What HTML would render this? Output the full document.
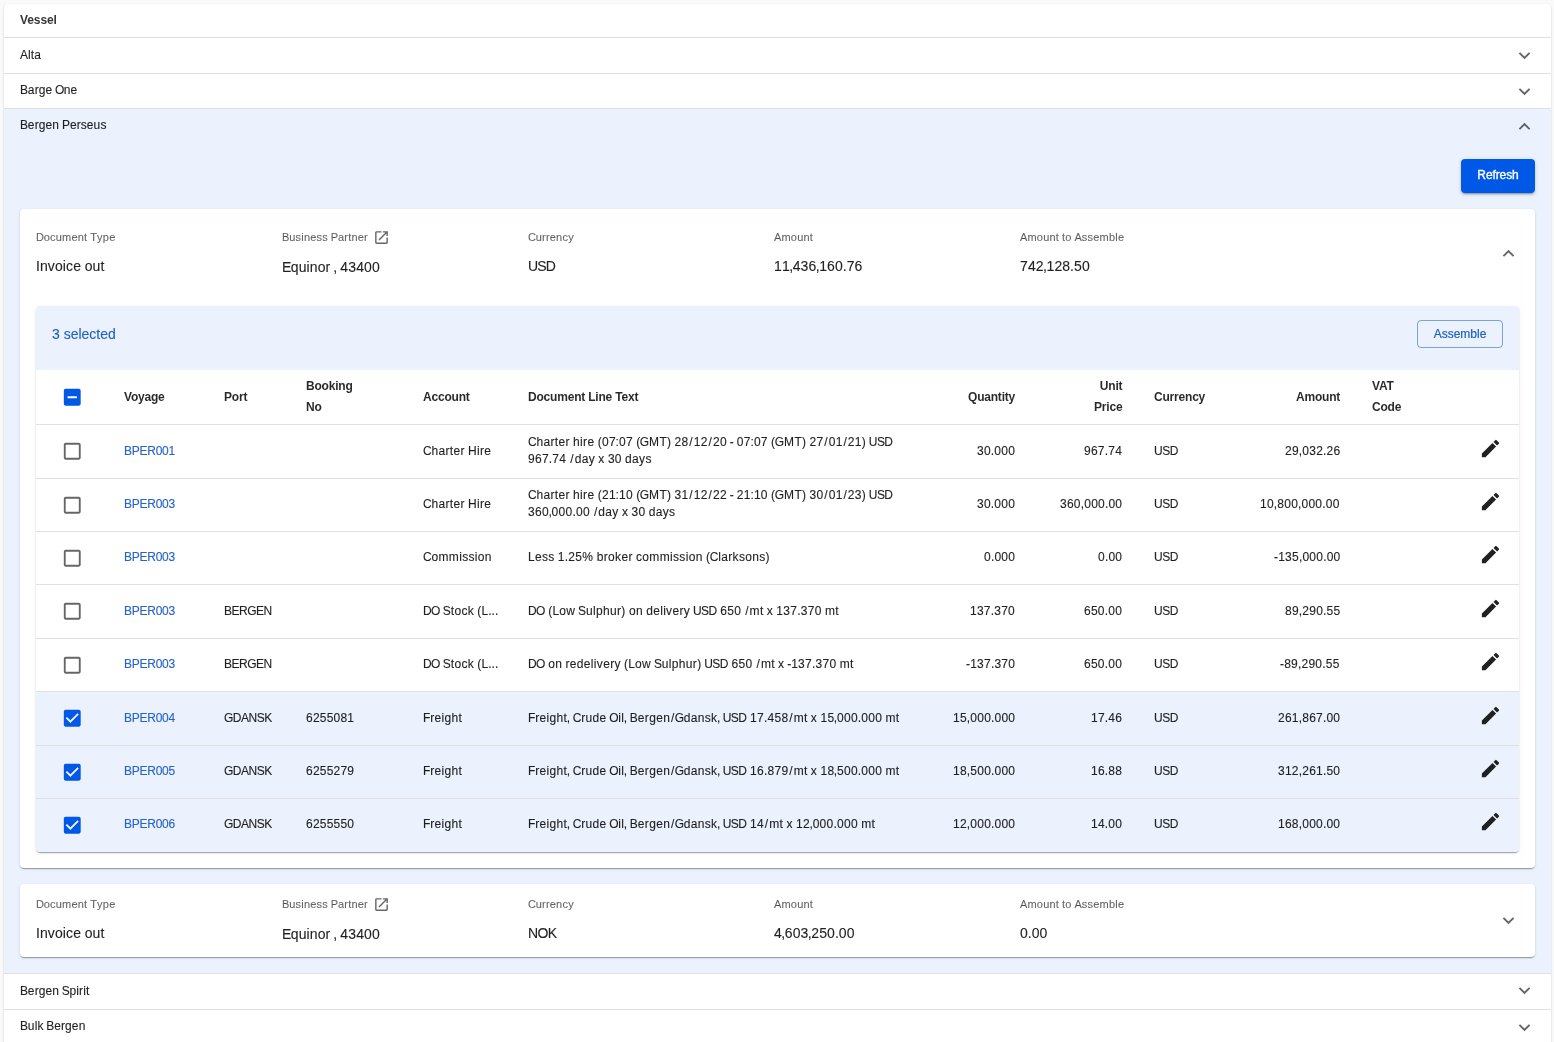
<!DOCTYPE html>
<html><head><meta charset="utf-8">
<style>
*{box-sizing:border-box;margin:0;padding:0}
html,body{width:1554px;height:1042px;overflow:hidden;background:#fafafa;font-family:"Liberation Sans",sans-serif;color:rgba(0,0,0,0.87)}
.a{position:absolute}
.t{white-space:nowrap}
svg{display:block}
.t{will-change:transform;-webkit-text-stroke:0.12px currentColor}
.u{letter-spacing:-0.4px}
</style></head><body>
<div class="a" style="left:4px;top:4px;width:1547px;height:1100px;background:#fff;border-radius:4px;box-shadow:0 2px 1px -1px rgba(0,0,0,.2),0 1px 1px 0 rgba(0,0,0,.14),0 1px 3px 0 rgba(0,0,0,.12)"></div>
<div class="a" style="left:4px;top:109px;width:1547px;height:864px;background:#ebf2fe"></div>
<div class="a" style="left:4px;top:37px;width:1547px;height:1px;background:#e0e0e0"></div>
<div class="a" style="left:4px;top:73px;width:1547px;height:1px;background:#e0e0e0"></div>
<div class="a" style="left:4px;top:108px;width:1547px;height:1px;background:#e0e0e0"></div>
<div class="a" style="left:4px;top:973px;width:1547px;height:1px;background:#e0e0e0"></div>
<div class="a" style="left:4px;top:1009px;width:1547px;height:1px;background:#e0e0e0"></div>
<div class="a t" style="left:20px;top:13px;font-size:12px;line-height:14px;font-weight:bold;color:rgba(0,0,0,0.8);letter-spacing:-0.1px;-webkit-text-stroke:0;">Vessel</div>
<div class="a t" style="left:20px;top:48px;font-size:12px;line-height:14px;font-weight:normal;color:rgba(0,0,0,0.87);"><span style="letter-spacing:0.03px">A</span><span style="letter-spacing:0.1px">lta</span></div>
<div class="a t" style="left:20px;top:83px;font-size:12px;line-height:14px;font-weight:normal;color:rgba(0,0,0,0.87);"><span style="letter-spacing:-0.15px">B</span><span style="letter-spacing:0.1px">arg</span><span style="letter-spacing:-0.07px">e</span><span style="letter-spacing:-0.59px"> </span><span style="letter-spacing:-0.42px">O</span><span style="letter-spacing:0.1px">ne</span></div>
<div class="a t" style="left:20px;top:118px;font-size:12px;line-height:14px;font-weight:normal;color:rgba(0,0,0,0.87);"><span style="letter-spacing:-0.15px">B</span><span style="letter-spacing:0.1px">erge</span><span style="letter-spacing:-0.07px">n</span><span style="letter-spacing:-0.27px"> </span><span style="letter-spacing:-0.1px">P</span><span style="letter-spacing:0.1px">erseus</span></div>
<div class="a t" style="left:20px;top:984px;font-size:12px;line-height:14px;font-weight:normal;color:rgba(0,0,0,0.87);"><span style="letter-spacing:-0.15px">B</span><span style="letter-spacing:0.1px">erge</span><span style="letter-spacing:-0.07px">n</span><span style="letter-spacing:-0.45px"> </span><span style="letter-spacing:-0.28px">S</span><span style="letter-spacing:0.1px">pirit</span></div>
<div class="a t" style="left:20px;top:1019px;font-size:12px;line-height:14px;font-weight:normal;color:rgba(0,0,0,0.87);"><span style="letter-spacing:-0.15px">B</span><span style="letter-spacing:0.1px">ul</span><span style="letter-spacing:-0.07px">k</span><span style="letter-spacing:-0.32px"> </span><span style="letter-spacing:-0.15px">B</span><span style="letter-spacing:0.1px">ergen</span></div>
<svg class="a" style="left:1512.95px;top:43.92px;width:23px;height:23px" viewBox="0 0 24 24"><path fill="rgba(0,0,0,0.6)" d="M16.59 8.59 12 13.17 7.41 8.59 6 10l6 6 6-6z"/></svg>
<svg class="a" style="left:1512.95px;top:79.72px;width:23px;height:23px" viewBox="0 0 24 24"><path fill="rgba(0,0,0,0.6)" d="M16.59 8.59 12 13.17 7.41 8.59 6 10l6 6 6-6z"/></svg>
<svg class="a" style="left:1512.95px;top:114.88px;width:23px;height:23px" viewBox="0 0 24 24"><path fill="rgba(0,0,0,0.6)" d="M12 8l-6 6 1.41 1.41L12 10.83l4.59 4.58L18 14z"/></svg>
<svg class="a" style="left:1512.95px;top:979.42px;width:23px;height:23px" viewBox="0 0 24 24"><path fill="rgba(0,0,0,0.6)" d="M16.59 8.59 12 13.17 7.41 8.59 6 10l6 6 6-6z"/></svg>
<svg class="a" style="left:1512.95px;top:1015.82px;width:23px;height:23px" viewBox="0 0 24 24"><path fill="rgba(0,0,0,0.6)" d="M16.59 8.59 12 13.17 7.41 8.59 6 10l6 6 6-6z"/></svg>
<div class="a t" style="left:1461px;top:159px;width:74px;height:34px;background:#0059e6;border-radius:4px;box-shadow:0 3px 1px -2px rgba(0,0,0,.2),0 2px 2px 0 rgba(0,0,0,.14),0 1px 5px 0 rgba(0,0,0,.12);color:#fff;font-size:12px;line-height:33px;text-align:center;font-weight:normal;-webkit-text-stroke:0.35px #fff;letter-spacing:-0.1px">Refresh</div>
<div class="a" style="left:20px;top:209px;width:1515px;height:659px;background:#fff;border-radius:4px;box-shadow:0 2px 1px -1px rgba(0,0,0,.2),0 1px 1px 0 rgba(0,0,0,.14),0 1px 3px 0 rgba(0,0,0,.12)"></div>
<div class="a t" style="left:36px;top:231px;font-size:11px;line-height:13px;font-weight:normal;color:rgba(0,0,0,0.6);"><span style="letter-spacing:-0.18px">D</span><span style="letter-spacing:0.2px">ocumen</span><span style="letter-spacing:0.03px">t</span><span style="letter-spacing:-0.03px"> </span><span style="letter-spacing:0.15px">T</span><span style="letter-spacing:0.2px">ype</span></div>
<div class="a t" style="left:36px;top:258px;font-size:14px;line-height:16px;font-weight:normal;color:rgba(0,0,0,0.87);"><span style="letter-spacing:0.08px">I</span><span style="letter-spacing:0.1px">nvoic</span><span style="letter-spacing:-0.1px">e </span><span style="letter-spacing:0.1px">out</span></div>
<div class="a t" style="left:282px;top:231px;font-size:11px;line-height:13px;font-weight:normal;color:rgba(0,0,0,0.6);"><span style="letter-spacing:-0.05px">B</span><span style="letter-spacing:0.2px">usines</span><span style="letter-spacing:0.03px">s</span><span style="letter-spacing:-0.18px"> </span><span style="letter-spacing:-0.01px">P</span><span style="letter-spacing:0.2px">artner</span></div>
<div class="a t" style="left:282px;top:259px;font-size:14px;line-height:16px;font-weight:normal;color:rgba(0,0,0,0.87);"><span style="letter-spacing:-0.58px">E</span><span style="letter-spacing:0.1px">quino</span><span style="letter-spacing:-0.1px">r</span><span style="letter-spacing:-0.66px"> ,</span><span style="letter-spacing:-0.1px"> </span><span style="letter-spacing:0.1px">43400</span></div>
<div class="a t" style="left:528px;top:231px;font-size:11px;line-height:13px;font-weight:normal;color:rgba(0,0,0,0.6);"><span style="letter-spacing:-0.2px">C</span><span style="letter-spacing:0.2px">urrency</span></div>
<div class="a t" style="left:528px;top:258px;font-size:14px;line-height:16px;font-weight:normal;color:rgba(0,0,0,0.87);"><span style="letter-spacing:-0.85px">U</span><span style="letter-spacing:-0.79px">SD</span></div>
<div class="a t" style="left:774px;top:231px;font-size:11px;line-height:13px;font-weight:normal;color:rgba(0,0,0,0.6);"><span style="letter-spacing:0.11px">A</span><span style="letter-spacing:0.2px">mount</span></div>
<div class="a t" style="left:774px;top:258px;font-size:14px;line-height:16px;font-weight:normal;color:rgba(0,0,0,0.87);"><span style="letter-spacing:0.1px">1</span><span style="letter-spacing:-0.46px">1,</span><span style="letter-spacing:0.1px">43</span><span style="letter-spacing:-0.46px">6,</span><span style="letter-spacing:0.1px">16</span><span style="letter-spacing:0.01px">0.</span><span style="letter-spacing:0.1px">76</span></div>
<div class="a t" style="left:1020px;top:231px;font-size:11px;line-height:13px;font-weight:normal;color:rgba(0,0,0,0.6);"><span style="letter-spacing:0.11px">A</span><span style="letter-spacing:0.2px">moun</span><span style="letter-spacing:0.03px">t </span><span style="letter-spacing:0.2px">t</span><span style="letter-spacing:0.03px">o</span><span style="letter-spacing:-0.07px"> </span><span style="letter-spacing:0.11px">A</span><span style="letter-spacing:0.2px">ssemble</span></div>
<div class="a t" style="left:1020px;top:258px;font-size:14px;line-height:16px;font-weight:normal;color:rgba(0,0,0,0.87);"><span style="letter-spacing:0.1px">74</span><span style="letter-spacing:-0.46px">2,</span><span style="letter-spacing:0.1px">12</span><span style="letter-spacing:0.01px">8.</span><span style="letter-spacing:0.1px">50</span></div>
<svg class="a" style="left:372.5px;top:229px;width:17px;height:17px" viewBox="0 0 24 24"><path fill="rgba(0,0,0,0.6)" d="M19 19H5V5h7V3H5c-1.11 0-2 .9-2 2v14c0 1.1.89 2 2 2h14c1.1 0 2-.9 2-2v-7h-2v7zM14 3v2h3.59l-9.83 9.83 1.41 1.41L19 6.41V10h2V3h-7z"/></svg>
<svg class="a" style="left:1497.0px;top:242.08px;width:23px;height:23px" viewBox="0 0 24 24"><path fill="rgba(0,0,0,0.6)" d="M12 8l-6 6 1.41 1.41L12 10.83l4.59 4.58L18 14z"/></svg>
<div class="a" style="left:36px;top:306px;width:1483px;height:546px;background:#fff;border-radius:4px;box-shadow:0 2px 1px -1px rgba(0,0,0,.2),0 1px 1px 0 rgba(0,0,0,.14),0 1px 3px 0 rgba(0,0,0,.12);overflow:hidden"></div>
<div class="a" style="left:36px;top:306px;width:1483px;height:64px;background:#ebf2fe;border-radius:4px 4px 0 0"></div>
<div class="a t" style="left:52px;top:326px;font-size:14px;line-height:16px;font-weight:normal;color:#2160c0;">3 selected</div>
<div class="a t" style="left:1417px;top:320px;width:86px;height:28px;border:1px solid rgba(33,96,192,0.55);border-radius:4px;color:#2160c0;font-size:12px;line-height:26px;-webkit-text-stroke:0.2px #2160c0;text-align:center">Assemble</div>
<div class="a" style="left:36px;top:424px;width:1483px;height:1px;background:#e0e0e0"></div>
<svg class="a" style="left:61px;top:386px;width:22.5px;height:22.5px" viewBox="0 0 24 24"><path fill="#0059e6" d="M19 3H5c-1.1 0-2 .9-2 2v14c0 1.1.9 2 2 2h14c1.1 0 2-.9 2-2V5c0-1.1-.9-2-2-2zm-2 10H7v-2h10v2z"/></svg>
<div class="a t" style="left:124px;top:387px;font-size:12px;line-height:21px;font-weight:bold;color:rgba(0,0,0,0.84);letter-spacing:-0.2px;-webkit-text-stroke:0;">Voyage</div>
<div class="a t" style="left:224px;top:387px;font-size:12px;line-height:21px;font-weight:bold;color:rgba(0,0,0,0.84);letter-spacing:-0.2px;-webkit-text-stroke:0;">Port</div>
<div class="a t" style="left:306px;top:376px;font-size:12px;line-height:21px;font-weight:bold;color:rgba(0,0,0,0.84);letter-spacing:-0.2px;-webkit-text-stroke:0;">Booking<br>No</div>
<div class="a t" style="left:423px;top:387px;font-size:12px;line-height:21px;font-weight:bold;color:rgba(0,0,0,0.84);letter-spacing:-0.2px;-webkit-text-stroke:0;">Account</div>
<div class="a t" style="left:528px;top:387px;font-size:12px;line-height:21px;font-weight:bold;color:rgba(0,0,0,0.84);letter-spacing:-0.2px;-webkit-text-stroke:0;">Document Line Text</div>
<div class="a t" style="right:539px;top:387px;font-size:12px;line-height:21px;font-weight:bold;color:rgba(0,0,0,0.84);text-align:right;letter-spacing:-0.2px;-webkit-text-stroke:0;">Quantity</div>
<div class="a t" style="right:432px;top:376px;font-size:12px;line-height:21px;font-weight:bold;color:rgba(0,0,0,0.84);text-align:right;letter-spacing:-0.2px;-webkit-text-stroke:0;">Unit<br>Price</div>
<div class="a t" style="left:1154px;top:387px;font-size:12px;line-height:21px;font-weight:bold;color:rgba(0,0,0,0.84);letter-spacing:-0.2px;-webkit-text-stroke:0;">Currency</div>
<div class="a t" style="right:214px;top:387px;font-size:12px;line-height:21px;font-weight:bold;color:rgba(0,0,0,0.84);text-align:right;letter-spacing:-0.2px;-webkit-text-stroke:0;">Amount</div>
<div class="a t" style="left:1372px;top:376px;font-size:12px;line-height:21px;font-weight:bold;color:rgba(0,0,0,0.84);letter-spacing:-0.2px;-webkit-text-stroke:0;">VAT<br>Code</div>
<div class="a" style="left:36px;top:478px;width:1483px;height:1px;background:#e0e0e0"></div>
<svg class="a" style="left:61px;top:440.2px;width:22.5px;height:22.5px" viewBox="0 0 24 24"><path fill="rgba(0,0,0,0.6)" d="M19 5v14H5V5h14m0-2H5c-1.1 0-2 .9-2 2v14c0 1.1.9 2 2 2h14c1.1 0 2-.9 2-2V5c0-1.1-.9-2-2-2z"/></svg>
<div class="a t" style="left:124px;top:443px;font-size:12px;line-height:16px;font-weight:normal;color:#2764c5;letter-spacing:-0.25px;">BPER001</div>
<div class="a t" style="left:423px;top:443px;font-size:12px;line-height:16px;font-weight:normal;color:rgba(0,0,0,0.87);letter-spacing:0.22px;"><span style="letter-spacing:-0.14px">C</span><span style="letter-spacing:0.33px">harte</span><span style="letter-spacing:0.11px">r</span><span style="letter-spacing:0.01px"> </span><span style="letter-spacing:0.23px">H</span><span style="letter-spacing:0.33px">ire</span></div>
<div class="a t" style="left:528px;top:434px;font-size:12px;line-height:17px;font-weight:normal;color:rgba(0,0,0,0.87);letter-spacing:0.22px;"><span style="letter-spacing:-0.14px">C</span><span style="letter-spacing:0.33px">harte</span><span style="letter-spacing:0.11px">r </span><span style="letter-spacing:0.33px">hir</span><span style="letter-spacing:0.11px">e</span><span style="letter-spacing:0.07px"> </span><span style="letter-spacing:0.28px">(</span><span style="letter-spacing:0.31px">0</span><span style="letter-spacing:0.03px">7:</span><span style="letter-spacing:0.31px">0</span><span style="letter-spacing:0.1px">7</span><span style="letter-spacing:0.07px"> </span><span style="letter-spacing:-0.33px">(</span><span style="letter-spacing:-0.1px">G</span><span style="letter-spacing:0.43px">M</span><span style="letter-spacing:0.23px">T</span><span style="letter-spacing:0.1px">) </span><span style="letter-spacing:0.31px">2</span><span style="letter-spacing:1.08px">8/</span><span style="letter-spacing:0.31px">1</span><span style="letter-spacing:1.08px">2/</span><span style="letter-spacing:0.31px">2</span><span style="letter-spacing:0.1px">0</span><span style="letter-spacing:-0.32px"> -</span><span style="letter-spacing:0.1px"> </span><span style="letter-spacing:0.31px">0</span><span style="letter-spacing:0.03px">7:</span><span style="letter-spacing:0.31px">0</span><span style="letter-spacing:0.1px">7</span><span style="letter-spacing:0.07px"> </span><span style="letter-spacing:-0.33px">(</span><span style="letter-spacing:-0.1px">G</span><span style="letter-spacing:0.43px">M</span><span style="letter-spacing:0.23px">T</span><span style="letter-spacing:0.1px">) </span><span style="letter-spacing:0.31px">2</span><span style="letter-spacing:1.08px">7/</span><span style="letter-spacing:0.31px">0</span><span style="letter-spacing:1.08px">1/</span><span style="letter-spacing:0.31px">21</span><span style="letter-spacing:0.1px">)</span><span style="letter-spacing:-0.39px"> </span><span style="letter-spacing:-0.6px">U</span><span style="letter-spacing:-0.55px">SD</span><br><span style="letter-spacing:0.31px">96</span><span style="letter-spacing:0.18px">7.</span><span style="letter-spacing:0.31px">7</span><span style="letter-spacing:0.1px">4</span><span style="letter-spacing:0.86px"> </span><span style="letter-spacing:1.09px">/</span><span style="letter-spacing:0.33px">da</span><span style="letter-spacing:0.11px">y x</span><span style="letter-spacing:0.1px"> </span><span style="letter-spacing:0.31px">3</span><span style="letter-spacing:0.1px">0</span><span style="letter-spacing:0.11px"> </span><span style="letter-spacing:0.33px">days</span></div>
<div class="a t" style="right:539px;top:443px;font-size:12px;line-height:16px;font-weight:normal;color:rgba(0,0,0,0.87);text-align:right;letter-spacing:0.22px;">30.000</div>
<div class="a t" style="right:432px;top:443px;font-size:12px;line-height:16px;font-weight:normal;color:rgba(0,0,0,0.87);text-align:right;letter-spacing:0.22px;">967.74</div>
<div class="a t" style="left:1153.5px;top:443px;font-size:12px;line-height:16px;font-weight:normal;color:rgba(0,0,0,0.87);letter-spacing:-0.45px;">USD</div>
<div class="a t" style="right:214px;top:443px;font-size:12px;line-height:16px;font-weight:normal;color:rgba(0,0,0,0.87);text-align:right;letter-spacing:0.22px;">29,032.26</div>
<svg class="a" style="left:1478.5px;top:436.7px;width:23px;height:23px" viewBox="0 0 24 24"><path fill="rgba(0,0,0,0.87)" d="M3 17.25V21h3.75L17.81 9.94l-3.75-3.75L3 17.25zM20.71 7.04c.39-.39.39-1.02 0-1.41l-2.34-2.34a.9959.9959 0 0 0-1.41 0l-1.83 1.83 3.75 3.75 1.83-1.83z"/></svg>
<div class="a" style="left:36px;top:531px;width:1483px;height:1px;background:#e0e0e0"></div>
<svg class="a" style="left:61px;top:493.8px;width:22.5px;height:22.5px" viewBox="0 0 24 24"><path fill="rgba(0,0,0,0.6)" d="M19 5v14H5V5h14m0-2H5c-1.1 0-2 .9-2 2v14c0 1.1.9 2 2 2h14c1.1 0 2-.9 2-2V5c0-1.1-.9-2-2-2z"/></svg>
<div class="a t" style="left:124px;top:496px;font-size:12px;line-height:16px;font-weight:normal;color:#2764c5;letter-spacing:-0.25px;">BPER003</div>
<div class="a t" style="left:423px;top:496px;font-size:12px;line-height:16px;font-weight:normal;color:rgba(0,0,0,0.87);letter-spacing:0.22px;"><span style="letter-spacing:-0.14px">C</span><span style="letter-spacing:0.33px">harte</span><span style="letter-spacing:0.11px">r</span><span style="letter-spacing:0.01px"> </span><span style="letter-spacing:0.23px">H</span><span style="letter-spacing:0.33px">ire</span></div>
<div class="a t" style="left:528px;top:487px;font-size:12px;line-height:17px;font-weight:normal;color:rgba(0,0,0,0.87);letter-spacing:0.22px;"><span style="letter-spacing:-0.14px">C</span><span style="letter-spacing:0.33px">harte</span><span style="letter-spacing:0.11px">r </span><span style="letter-spacing:0.33px">hir</span><span style="letter-spacing:0.11px">e</span><span style="letter-spacing:0.07px"> </span><span style="letter-spacing:0.28px">(</span><span style="letter-spacing:0.31px">2</span><span style="letter-spacing:0.03px">1:</span><span style="letter-spacing:0.31px">1</span><span style="letter-spacing:0.1px">0</span><span style="letter-spacing:0.07px"> </span><span style="letter-spacing:-0.33px">(</span><span style="letter-spacing:-0.1px">G</span><span style="letter-spacing:0.43px">M</span><span style="letter-spacing:0.23px">T</span><span style="letter-spacing:0.1px">) </span><span style="letter-spacing:0.31px">3</span><span style="letter-spacing:1.08px">1/</span><span style="letter-spacing:0.31px">1</span><span style="letter-spacing:1.08px">2/</span><span style="letter-spacing:0.31px">2</span><span style="letter-spacing:0.1px">2</span><span style="letter-spacing:-0.32px"> -</span><span style="letter-spacing:0.1px"> </span><span style="letter-spacing:0.31px">2</span><span style="letter-spacing:0.03px">1:</span><span style="letter-spacing:0.31px">1</span><span style="letter-spacing:0.1px">0</span><span style="letter-spacing:0.07px"> </span><span style="letter-spacing:-0.33px">(</span><span style="letter-spacing:-0.1px">G</span><span style="letter-spacing:0.43px">M</span><span style="letter-spacing:0.23px">T</span><span style="letter-spacing:0.1px">) </span><span style="letter-spacing:0.31px">3</span><span style="letter-spacing:1.08px">0/</span><span style="letter-spacing:0.31px">0</span><span style="letter-spacing:1.08px">1/</span><span style="letter-spacing:0.31px">23</span><span style="letter-spacing:0.1px">)</span><span style="letter-spacing:-0.39px"> </span><span style="letter-spacing:-0.6px">U</span><span style="letter-spacing:-0.55px">SD</span><br><span style="letter-spacing:0.31px">36</span><span style="letter-spacing:-0.21px">0,</span><span style="letter-spacing:0.31px">00</span><span style="letter-spacing:0.18px">0.</span><span style="letter-spacing:0.31px">0</span><span style="letter-spacing:0.1px">0</span><span style="letter-spacing:0.86px"> </span><span style="letter-spacing:1.09px">/</span><span style="letter-spacing:0.33px">da</span><span style="letter-spacing:0.11px">y x</span><span style="letter-spacing:0.1px"> </span><span style="letter-spacing:0.31px">3</span><span style="letter-spacing:0.1px">0</span><span style="letter-spacing:0.11px"> </span><span style="letter-spacing:0.33px">days</span></div>
<div class="a t" style="right:539px;top:496px;font-size:12px;line-height:16px;font-weight:normal;color:rgba(0,0,0,0.87);text-align:right;letter-spacing:0.22px;">30.000</div>
<div class="a t" style="right:432px;top:496px;font-size:12px;line-height:16px;font-weight:normal;color:rgba(0,0,0,0.87);text-align:right;letter-spacing:0.22px;">360,000.00</div>
<div class="a t" style="left:1153.5px;top:496px;font-size:12px;line-height:16px;font-weight:normal;color:rgba(0,0,0,0.87);letter-spacing:-0.45px;">USD</div>
<div class="a t" style="right:214px;top:496px;font-size:12px;line-height:16px;font-weight:normal;color:rgba(0,0,0,0.87);text-align:right;letter-spacing:0.22px;">10,800,000.00</div>
<svg class="a" style="left:1478.5px;top:489.7px;width:23px;height:23px" viewBox="0 0 24 24"><path fill="rgba(0,0,0,0.87)" d="M3 17.25V21h3.75L17.81 9.94l-3.75-3.75L3 17.25zM20.71 7.04c.39-.39.39-1.02 0-1.41l-2.34-2.34a.9959.9959 0 0 0-1.41 0l-1.83 1.83 3.75 3.75 1.83-1.83z"/></svg>
<div class="a" style="left:36px;top:584px;width:1483px;height:1px;background:#e0e0e0"></div>
<svg class="a" style="left:61px;top:546.8px;width:22.5px;height:22.5px" viewBox="0 0 24 24"><path fill="rgba(0,0,0,0.6)" d="M19 5v14H5V5h14m0-2H5c-1.1 0-2 .9-2 2v14c0 1.1.9 2 2 2h14c1.1 0 2-.9 2-2V5c0-1.1-.9-2-2-2z"/></svg>
<div class="a t" style="left:124px;top:549px;font-size:12px;line-height:16px;font-weight:normal;color:#2764c5;letter-spacing:-0.25px;">BPER003</div>
<div class="a t" style="left:423px;top:549px;font-size:12px;line-height:16px;font-weight:normal;color:rgba(0,0,0,0.87);letter-spacing:0.22px;"><span style="letter-spacing:-0.14px">C</span><span style="letter-spacing:0.33px">ommission</span></div>
<div class="a t" style="left:528px;top:549px;font-size:12px;line-height:16px;font-weight:normal;color:rgba(0,0,0,0.87);letter-spacing:0.22px;"><span style="letter-spacing:0.19px">L</span><span style="letter-spacing:0.33px">es</span><span style="letter-spacing:0.11px">s</span><span style="letter-spacing:0.1px"> </span><span style="letter-spacing:0.18px">1.</span><span style="letter-spacing:0.31px">2</span><span style="letter-spacing:0.52px">5</span><span style="letter-spacing:0.3px">%</span><span style="letter-spacing:0.11px"> </span><span style="letter-spacing:0.33px">broke</span><span style="letter-spacing:0.11px">r </span><span style="letter-spacing:0.33px">commissio</span><span style="letter-spacing:0.11px">n</span><span style="letter-spacing:0.07px"> </span><span style="letter-spacing:-0.18px">(</span><span style="letter-spacing:-0.14px">C</span><span style="letter-spacing:0.33px">larkson</span><span style="letter-spacing:0.32px">s</span><span style="letter-spacing:0.31px">)</span></div>
<div class="a t" style="right:539px;top:549px;font-size:12px;line-height:16px;font-weight:normal;color:rgba(0,0,0,0.87);text-align:right;letter-spacing:0.22px;">0.000</div>
<div class="a t" style="right:432px;top:549px;font-size:12px;line-height:16px;font-weight:normal;color:rgba(0,0,0,0.87);text-align:right;letter-spacing:0.22px;">0.00</div>
<div class="a t" style="left:1153.5px;top:549px;font-size:12px;line-height:16px;font-weight:normal;color:rgba(0,0,0,0.87);letter-spacing:-0.45px;">USD</div>
<div class="a t" style="right:214px;top:549px;font-size:12px;line-height:16px;font-weight:normal;color:rgba(0,0,0,0.87);text-align:right;letter-spacing:0.22px;">-135,000.00</div>
<svg class="a" style="left:1478.5px;top:542.7px;width:23px;height:23px" viewBox="0 0 24 24"><path fill="rgba(0,0,0,0.87)" d="M3 17.25V21h3.75L17.81 9.94l-3.75-3.75L3 17.25zM20.71 7.04c.39-.39.39-1.02 0-1.41l-2.34-2.34a.9959.9959 0 0 0-1.41 0l-1.83 1.83 3.75 3.75 1.83-1.83z"/></svg>
<div class="a" style="left:36px;top:638px;width:1483px;height:1px;background:#e0e0e0"></div>
<svg class="a" style="left:61px;top:600.2px;width:22.5px;height:22.5px" viewBox="0 0 24 24"><path fill="rgba(0,0,0,0.6)" d="M19 5v14H5V5h14m0-2H5c-1.1 0-2 .9-2 2v14c0 1.1.9 2 2 2h14c1.1 0 2-.9 2-2V5c0-1.1-.9-2-2-2z"/></svg>
<div class="a t" style="left:124px;top:603px;font-size:12px;line-height:16px;font-weight:normal;color:#2764c5;letter-spacing:-0.25px;">BPER003</div>
<div class="a t" style="left:224px;top:603px;font-size:12px;line-height:16px;font-weight:normal;color:rgba(0,0,0,0.87);letter-spacing:-0.5px;">BERGEN</div>
<div class="a t" style="left:423px;top:603px;font-size:12px;line-height:16px;font-weight:normal;color:rgba(0,0,0,0.87);letter-spacing:0.22px;"><span style="letter-spacing:-0.7px">D</span><span style="letter-spacing:-0.48px">O</span><span style="letter-spacing:-0.34px"> </span><span style="letter-spacing:-0.11px">S</span><span style="letter-spacing:0.33px">toc</span><span style="letter-spacing:0.11px">k</span><span style="letter-spacing:0.07px"> </span><span style="letter-spacing:0.15px">(</span><span style="letter-spacing:0.06px">L...</span></div>
<div class="a t" style="left:528px;top:603px;font-size:12px;line-height:16px;font-weight:normal;color:rgba(0,0,0,0.87);letter-spacing:0.22px;"><span style="letter-spacing:-0.7px">D</span><span style="letter-spacing:-0.48px">O</span><span style="letter-spacing:0.07px"> </span><span style="letter-spacing:0.15px">(</span><span style="letter-spacing:0.19px">L</span><span style="letter-spacing:0.33px">o</span><span style="letter-spacing:0.11px">w</span><span style="letter-spacing:-0.34px"> </span><span style="letter-spacing:-0.11px">S</span><span style="letter-spacing:0.33px">ulphu</span><span style="letter-spacing:0.32px">r</span><span style="letter-spacing:0.1px">)</span><span style="letter-spacing:0.11px"> </span><span style="letter-spacing:0.33px">o</span><span style="letter-spacing:0.11px">n </span><span style="letter-spacing:0.33px">deliver</span><span style="letter-spacing:0.11px">y</span><span style="letter-spacing:-0.39px"> </span><span style="letter-spacing:-0.6px">U</span><span style="letter-spacing:-0.55px">S</span><span style="letter-spacing:-0.34px">D</span><span style="letter-spacing:0.1px"> </span><span style="letter-spacing:0.31px">65</span><span style="letter-spacing:0.1px">0</span><span style="letter-spacing:0.86px"> </span><span style="letter-spacing:1.09px">/</span><span style="letter-spacing:0.33px">m</span><span style="letter-spacing:0.11px">t x</span><span style="letter-spacing:0.1px"> </span><span style="letter-spacing:0.31px">13</span><span style="letter-spacing:0.18px">7.</span><span style="letter-spacing:0.31px">37</span><span style="letter-spacing:0.1px">0</span><span style="letter-spacing:0.11px"> </span><span style="letter-spacing:0.33px">mt</span></div>
<div class="a t" style="right:539px;top:603px;font-size:12px;line-height:16px;font-weight:normal;color:rgba(0,0,0,0.87);text-align:right;letter-spacing:0.22px;">137.370</div>
<div class="a t" style="right:432px;top:603px;font-size:12px;line-height:16px;font-weight:normal;color:rgba(0,0,0,0.87);text-align:right;letter-spacing:0.22px;">650.00</div>
<div class="a t" style="left:1153.5px;top:603px;font-size:12px;line-height:16px;font-weight:normal;color:rgba(0,0,0,0.87);letter-spacing:-0.45px;">USD</div>
<div class="a t" style="right:214px;top:603px;font-size:12px;line-height:16px;font-weight:normal;color:rgba(0,0,0,0.87);text-align:right;letter-spacing:0.22px;">89,290.55</div>
<svg class="a" style="left:1478.5px;top:596.7px;width:23px;height:23px" viewBox="0 0 24 24"><path fill="rgba(0,0,0,0.87)" d="M3 17.25V21h3.75L17.81 9.94l-3.75-3.75L3 17.25zM20.71 7.04c.39-.39.39-1.02 0-1.41l-2.34-2.34a.9959.9959 0 0 0-1.41 0l-1.83 1.83 3.75 3.75 1.83-1.83z"/></svg>
<div class="a" style="left:36px;top:691px;width:1483px;height:1px;background:#e0e0e0"></div>
<svg class="a" style="left:61px;top:653.8px;width:22.5px;height:22.5px" viewBox="0 0 24 24"><path fill="rgba(0,0,0,0.6)" d="M19 5v14H5V5h14m0-2H5c-1.1 0-2 .9-2 2v14c0 1.1.9 2 2 2h14c1.1 0 2-.9 2-2V5c0-1.1-.9-2-2-2z"/></svg>
<div class="a t" style="left:124px;top:656px;font-size:12px;line-height:16px;font-weight:normal;color:#2764c5;letter-spacing:-0.25px;">BPER003</div>
<div class="a t" style="left:224px;top:656px;font-size:12px;line-height:16px;font-weight:normal;color:rgba(0,0,0,0.87);letter-spacing:-0.5px;">BERGEN</div>
<div class="a t" style="left:423px;top:656px;font-size:12px;line-height:16px;font-weight:normal;color:rgba(0,0,0,0.87);letter-spacing:0.22px;"><span style="letter-spacing:-0.7px">D</span><span style="letter-spacing:-0.48px">O</span><span style="letter-spacing:-0.34px"> </span><span style="letter-spacing:-0.11px">S</span><span style="letter-spacing:0.33px">toc</span><span style="letter-spacing:0.11px">k</span><span style="letter-spacing:0.07px"> </span><span style="letter-spacing:0.15px">(</span><span style="letter-spacing:0.06px">L...</span></div>
<div class="a t" style="left:528px;top:656px;font-size:12px;line-height:16px;font-weight:normal;color:rgba(0,0,0,0.87);letter-spacing:0.22px;"><span style="letter-spacing:-0.7px">D</span><span style="letter-spacing:-0.48px">O</span><span style="letter-spacing:0.11px"> </span><span style="letter-spacing:0.33px">o</span><span style="letter-spacing:0.11px">n </span><span style="letter-spacing:0.33px">redeliver</span><span style="letter-spacing:0.11px">y</span><span style="letter-spacing:0.07px"> </span><span style="letter-spacing:0.15px">(</span><span style="letter-spacing:0.19px">L</span><span style="letter-spacing:0.33px">o</span><span style="letter-spacing:0.11px">w</span><span style="letter-spacing:-0.34px"> </span><span style="letter-spacing:-0.11px">S</span><span style="letter-spacing:0.33px">ulphu</span><span style="letter-spacing:0.32px">r</span><span style="letter-spacing:0.1px">)</span><span style="letter-spacing:-0.39px"> </span><span style="letter-spacing:-0.6px">U</span><span style="letter-spacing:-0.55px">S</span><span style="letter-spacing:-0.34px">D</span><span style="letter-spacing:0.1px"> </span><span style="letter-spacing:0.31px">65</span><span style="letter-spacing:0.1px">0</span><span style="letter-spacing:0.86px"> </span><span style="letter-spacing:1.09px">/</span><span style="letter-spacing:0.33px">m</span><span style="letter-spacing:0.11px">t x</span><span style="letter-spacing:-0.32px"> </span><span style="letter-spacing:-0.11px">-</span><span style="letter-spacing:0.31px">13</span><span style="letter-spacing:0.18px">7.</span><span style="letter-spacing:0.31px">37</span><span style="letter-spacing:0.1px">0</span><span style="letter-spacing:0.11px"> </span><span style="letter-spacing:0.33px">mt</span></div>
<div class="a t" style="right:539px;top:656px;font-size:12px;line-height:16px;font-weight:normal;color:rgba(0,0,0,0.87);text-align:right;letter-spacing:0.22px;">-137.370</div>
<div class="a t" style="right:432px;top:656px;font-size:12px;line-height:16px;font-weight:normal;color:rgba(0,0,0,0.87);text-align:right;letter-spacing:0.22px;">650.00</div>
<div class="a t" style="left:1153.5px;top:656px;font-size:12px;line-height:16px;font-weight:normal;color:rgba(0,0,0,0.87);letter-spacing:-0.45px;">USD</div>
<div class="a t" style="right:214px;top:656px;font-size:12px;line-height:16px;font-weight:normal;color:rgba(0,0,0,0.87);text-align:right;letter-spacing:0.22px;">-89,290.55</div>
<svg class="a" style="left:1478.5px;top:649.7px;width:23px;height:23px" viewBox="0 0 24 24"><path fill="rgba(0,0,0,0.87)" d="M3 17.25V21h3.75L17.81 9.94l-3.75-3.75L3 17.25zM20.71 7.04c.39-.39.39-1.02 0-1.41l-2.34-2.34a.9959.9959 0 0 0-1.41 0l-1.83 1.83 3.75 3.75 1.83-1.83z"/></svg>
<div class="a" style="left:36px;top:692px;width:1483px;height:53px;background:#ebf2fe"></div>
<div class="a" style="left:36px;top:745px;width:1483px;height:1px;background:#e0e0e0"></div>
<svg class="a" style="left:61px;top:707.2px;width:22.5px;height:22.5px" viewBox="0 0 24 24"><path fill="#0059e6" d="M19 3H5c-1.11 0-2 .9-2 2v14c0 1.1.89 2 2 2h14c1.1 0 2-.9 2-2V5c0-1.1-.9-2-2-2zm-9 14l-5-5 1.41-1.41L10 14.17l7.59-7.59L19 8l-9 9z"/></svg>
<div class="a t" style="left:124px;top:710px;font-size:12px;line-height:16px;font-weight:normal;color:#2764c5;letter-spacing:-0.25px;">BPER004</div>
<div class="a t" style="left:224px;top:710px;font-size:12px;line-height:16px;font-weight:normal;color:rgba(0,0,0,0.87);letter-spacing:-0.5px;">GDANSK</div>
<div class="a t" style="left:306px;top:710px;font-size:12px;line-height:16px;font-weight:normal;color:rgba(0,0,0,0.87);letter-spacing:0.22px;">6255081</div>
<div class="a t" style="left:423px;top:710px;font-size:12px;line-height:16px;font-weight:normal;color:rgba(0,0,0,0.87);letter-spacing:0.22px;"><span style="letter-spacing:-0.07px">F</span><span style="letter-spacing:0.33px">reight</span></div>
<div class="a t" style="left:528px;top:710px;font-size:12px;line-height:16px;font-weight:normal;color:rgba(0,0,0,0.87);letter-spacing:0.22px;"><span style="letter-spacing:-0.07px">F</span><span style="letter-spacing:0.33px">reigh</span><span style="letter-spacing:-0.2px">t</span><span style="letter-spacing:-0.43px">,</span><span style="letter-spacing:-0.36px"> </span><span style="letter-spacing:-0.14px">C</span><span style="letter-spacing:0.33px">rud</span><span style="letter-spacing:0.11px">e</span><span style="letter-spacing:-0.48px"> </span><span style="letter-spacing:-0.26px">O</span><span style="letter-spacing:0.33px">i</span><span style="letter-spacing:-0.2px">l</span><span style="letter-spacing:-0.43px">,</span><span style="letter-spacing:-0.2px"> </span><span style="letter-spacing:0.02px">B</span><span style="letter-spacing:0.33px">erge</span><span style="letter-spacing:1.09px">n</span><span style="letter-spacing:0.47px">/</span><span style="letter-spacing:-0.29px">G</span><span style="letter-spacing:0.33px">dans</span><span style="letter-spacing:-0.2px">k</span><span style="letter-spacing:-0.43px">,</span><span style="letter-spacing:-0.39px"> </span><span style="letter-spacing:-0.6px">U</span><span style="letter-spacing:-0.55px">S</span><span style="letter-spacing:-0.34px">D</span><span style="letter-spacing:0.1px"> </span><span style="letter-spacing:0.31px">1</span><span style="letter-spacing:0.18px">7.</span><span style="letter-spacing:0.31px">45</span><span style="letter-spacing:1.08px">8</span><span style="letter-spacing:1.09px">/</span><span style="letter-spacing:0.33px">m</span><span style="letter-spacing:0.11px">t x</span><span style="letter-spacing:0.1px"> </span><span style="letter-spacing:0.31px">1</span><span style="letter-spacing:-0.21px">5,</span><span style="letter-spacing:0.31px">00</span><span style="letter-spacing:0.18px">0.</span><span style="letter-spacing:0.31px">00</span><span style="letter-spacing:0.1px">0</span><span style="letter-spacing:0.11px"> </span><span style="letter-spacing:0.33px">mt</span></div>
<div class="a t" style="right:539px;top:710px;font-size:12px;line-height:16px;font-weight:normal;color:rgba(0,0,0,0.87);text-align:right;letter-spacing:0.22px;">15,000.000</div>
<div class="a t" style="right:432px;top:710px;font-size:12px;line-height:16px;font-weight:normal;color:rgba(0,0,0,0.87);text-align:right;letter-spacing:0.22px;">17.46</div>
<div class="a t" style="left:1153.5px;top:710px;font-size:12px;line-height:16px;font-weight:normal;color:rgba(0,0,0,0.87);letter-spacing:-0.45px;">USD</div>
<div class="a t" style="right:214px;top:710px;font-size:12px;line-height:16px;font-weight:normal;color:rgba(0,0,0,0.87);text-align:right;letter-spacing:0.22px;">261,867.00</div>
<svg class="a" style="left:1478.5px;top:703.7px;width:23px;height:23px" viewBox="0 0 24 24"><path fill="rgba(0,0,0,0.87)" d="M3 17.25V21h3.75L17.81 9.94l-3.75-3.75L3 17.25zM20.71 7.04c.39-.39.39-1.02 0-1.41l-2.34-2.34a.9959.9959 0 0 0-1.41 0l-1.83 1.83 3.75 3.75 1.83-1.83z"/></svg>
<div class="a" style="left:36px;top:746px;width:1483px;height:52px;background:#ebf2fe"></div>
<div class="a" style="left:36px;top:798px;width:1483px;height:1px;background:#e0e0e0"></div>
<svg class="a" style="left:61px;top:760.8px;width:22.5px;height:22.5px" viewBox="0 0 24 24"><path fill="#0059e6" d="M19 3H5c-1.11 0-2 .9-2 2v14c0 1.1.89 2 2 2h14c1.1 0 2-.9 2-2V5c0-1.1-.9-2-2-2zm-9 14l-5-5 1.41-1.41L10 14.17l7.59-7.59L19 8l-9 9z"/></svg>
<div class="a t" style="left:124px;top:763px;font-size:12px;line-height:16px;font-weight:normal;color:#2764c5;letter-spacing:-0.25px;">BPER005</div>
<div class="a t" style="left:224px;top:763px;font-size:12px;line-height:16px;font-weight:normal;color:rgba(0,0,0,0.87);letter-spacing:-0.5px;">GDANSK</div>
<div class="a t" style="left:306px;top:763px;font-size:12px;line-height:16px;font-weight:normal;color:rgba(0,0,0,0.87);letter-spacing:0.22px;">6255279</div>
<div class="a t" style="left:423px;top:763px;font-size:12px;line-height:16px;font-weight:normal;color:rgba(0,0,0,0.87);letter-spacing:0.22px;"><span style="letter-spacing:-0.07px">F</span><span style="letter-spacing:0.33px">reight</span></div>
<div class="a t" style="left:528px;top:763px;font-size:12px;line-height:16px;font-weight:normal;color:rgba(0,0,0,0.87);letter-spacing:0.22px;"><span style="letter-spacing:-0.07px">F</span><span style="letter-spacing:0.33px">reigh</span><span style="letter-spacing:-0.2px">t</span><span style="letter-spacing:-0.43px">,</span><span style="letter-spacing:-0.36px"> </span><span style="letter-spacing:-0.14px">C</span><span style="letter-spacing:0.33px">rud</span><span style="letter-spacing:0.11px">e</span><span style="letter-spacing:-0.48px"> </span><span style="letter-spacing:-0.26px">O</span><span style="letter-spacing:0.33px">i</span><span style="letter-spacing:-0.2px">l</span><span style="letter-spacing:-0.43px">,</span><span style="letter-spacing:-0.2px"> </span><span style="letter-spacing:0.02px">B</span><span style="letter-spacing:0.33px">erge</span><span style="letter-spacing:1.09px">n</span><span style="letter-spacing:0.47px">/</span><span style="letter-spacing:-0.29px">G</span><span style="letter-spacing:0.33px">dans</span><span style="letter-spacing:-0.2px">k</span><span style="letter-spacing:-0.43px">,</span><span style="letter-spacing:-0.39px"> </span><span style="letter-spacing:-0.6px">U</span><span style="letter-spacing:-0.55px">S</span><span style="letter-spacing:-0.34px">D</span><span style="letter-spacing:0.1px"> </span><span style="letter-spacing:0.31px">1</span><span style="letter-spacing:0.18px">6.</span><span style="letter-spacing:0.31px">87</span><span style="letter-spacing:1.08px">9</span><span style="letter-spacing:1.09px">/</span><span style="letter-spacing:0.33px">m</span><span style="letter-spacing:0.11px">t x</span><span style="letter-spacing:0.1px"> </span><span style="letter-spacing:0.31px">1</span><span style="letter-spacing:-0.21px">8,</span><span style="letter-spacing:0.31px">50</span><span style="letter-spacing:0.18px">0.</span><span style="letter-spacing:0.31px">00</span><span style="letter-spacing:0.1px">0</span><span style="letter-spacing:0.11px"> </span><span style="letter-spacing:0.33px">mt</span></div>
<div class="a t" style="right:539px;top:763px;font-size:12px;line-height:16px;font-weight:normal;color:rgba(0,0,0,0.87);text-align:right;letter-spacing:0.22px;">18,500.000</div>
<div class="a t" style="right:432px;top:763px;font-size:12px;line-height:16px;font-weight:normal;color:rgba(0,0,0,0.87);text-align:right;letter-spacing:0.22px;">16.88</div>
<div class="a t" style="left:1153.5px;top:763px;font-size:12px;line-height:16px;font-weight:normal;color:rgba(0,0,0,0.87);letter-spacing:-0.45px;">USD</div>
<div class="a t" style="right:214px;top:763px;font-size:12px;line-height:16px;font-weight:normal;color:rgba(0,0,0,0.87);text-align:right;letter-spacing:0.22px;">312,261.50</div>
<svg class="a" style="left:1478.5px;top:756.7px;width:23px;height:23px" viewBox="0 0 24 24"><path fill="rgba(0,0,0,0.87)" d="M3 17.25V21h3.75L17.81 9.94l-3.75-3.75L3 17.25zM20.71 7.04c.39-.39.39-1.02 0-1.41l-2.34-2.34a.9959.9959 0 0 0-1.41 0l-1.83 1.83 3.75 3.75 1.83-1.83z"/></svg>
<div class="a" style="left:36px;top:799px;width:1483px;height:53px;background:#ebf2fe;border-radius:0 0 4px 4px"></div>
<svg class="a" style="left:61px;top:814.2px;width:22.5px;height:22.5px" viewBox="0 0 24 24"><path fill="#0059e6" d="M19 3H5c-1.11 0-2 .9-2 2v14c0 1.1.89 2 2 2h14c1.1 0 2-.9 2-2V5c0-1.1-.9-2-2-2zm-9 14l-5-5 1.41-1.41L10 14.17l7.59-7.59L19 8l-9 9z"/></svg>
<div class="a t" style="left:124px;top:816px;font-size:12px;line-height:16px;font-weight:normal;color:#2764c5;letter-spacing:-0.25px;">BPER006</div>
<div class="a t" style="left:224px;top:816px;font-size:12px;line-height:16px;font-weight:normal;color:rgba(0,0,0,0.87);letter-spacing:-0.5px;">GDANSK</div>
<div class="a t" style="left:306px;top:816px;font-size:12px;line-height:16px;font-weight:normal;color:rgba(0,0,0,0.87);letter-spacing:0.22px;">6255550</div>
<div class="a t" style="left:423px;top:816px;font-size:12px;line-height:16px;font-weight:normal;color:rgba(0,0,0,0.87);letter-spacing:0.22px;"><span style="letter-spacing:-0.07px">F</span><span style="letter-spacing:0.33px">reight</span></div>
<div class="a t" style="left:528px;top:816px;font-size:12px;line-height:16px;font-weight:normal;color:rgba(0,0,0,0.87);letter-spacing:0.22px;"><span style="letter-spacing:-0.07px">F</span><span style="letter-spacing:0.33px">reigh</span><span style="letter-spacing:-0.2px">t</span><span style="letter-spacing:-0.43px">,</span><span style="letter-spacing:-0.36px"> </span><span style="letter-spacing:-0.14px">C</span><span style="letter-spacing:0.33px">rud</span><span style="letter-spacing:0.11px">e</span><span style="letter-spacing:-0.48px"> </span><span style="letter-spacing:-0.26px">O</span><span style="letter-spacing:0.33px">i</span><span style="letter-spacing:-0.2px">l</span><span style="letter-spacing:-0.43px">,</span><span style="letter-spacing:-0.2px"> </span><span style="letter-spacing:0.02px">B</span><span style="letter-spacing:0.33px">erge</span><span style="letter-spacing:1.09px">n</span><span style="letter-spacing:0.47px">/</span><span style="letter-spacing:-0.29px">G</span><span style="letter-spacing:0.33px">dans</span><span style="letter-spacing:-0.2px">k</span><span style="letter-spacing:-0.43px">,</span><span style="letter-spacing:-0.39px"> </span><span style="letter-spacing:-0.6px">U</span><span style="letter-spacing:-0.55px">S</span><span style="letter-spacing:-0.34px">D</span><span style="letter-spacing:0.1px"> </span><span style="letter-spacing:0.31px">1</span><span style="letter-spacing:1.08px">4</span><span style="letter-spacing:1.09px">/</span><span style="letter-spacing:0.33px">m</span><span style="letter-spacing:0.11px">t x</span><span style="letter-spacing:0.1px"> </span><span style="letter-spacing:0.31px">1</span><span style="letter-spacing:-0.21px">2,</span><span style="letter-spacing:0.31px">00</span><span style="letter-spacing:0.18px">0.</span><span style="letter-spacing:0.31px">00</span><span style="letter-spacing:0.1px">0</span><span style="letter-spacing:0.11px"> </span><span style="letter-spacing:0.33px">mt</span></div>
<div class="a t" style="right:539px;top:816px;font-size:12px;line-height:16px;font-weight:normal;color:rgba(0,0,0,0.87);text-align:right;letter-spacing:0.22px;">12,000.000</div>
<div class="a t" style="right:432px;top:816px;font-size:12px;line-height:16px;font-weight:normal;color:rgba(0,0,0,0.87);text-align:right;letter-spacing:0.22px;">14.00</div>
<div class="a t" style="left:1153.5px;top:816px;font-size:12px;line-height:16px;font-weight:normal;color:rgba(0,0,0,0.87);letter-spacing:-0.45px;">USD</div>
<div class="a t" style="right:214px;top:816px;font-size:12px;line-height:16px;font-weight:normal;color:rgba(0,0,0,0.87);text-align:right;letter-spacing:0.22px;">168,000.00</div>
<svg class="a" style="left:1478.5px;top:809.7px;width:23px;height:23px" viewBox="0 0 24 24"><path fill="rgba(0,0,0,0.87)" d="M3 17.25V21h3.75L17.81 9.94l-3.75-3.75L3 17.25zM20.71 7.04c.39-.39.39-1.02 0-1.41l-2.34-2.34a.9959.9959 0 0 0-1.41 0l-1.83 1.83 3.75 3.75 1.83-1.83z"/></svg>
<div class="a" style="left:20px;top:884px;width:1515px;height:73px;background:#fff;border-radius:4px;box-shadow:0 2px 1px -1px rgba(0,0,0,.2),0 1px 1px 0 rgba(0,0,0,.14),0 1px 3px 0 rgba(0,0,0,.12)"></div>
<div class="a t" style="left:36px;top:898px;font-size:11px;line-height:13px;font-weight:normal;color:rgba(0,0,0,0.6);"><span style="letter-spacing:-0.18px">D</span><span style="letter-spacing:0.2px">ocumen</span><span style="letter-spacing:0.03px">t</span><span style="letter-spacing:-0.03px"> </span><span style="letter-spacing:0.15px">T</span><span style="letter-spacing:0.2px">ype</span></div>
<div class="a t" style="left:36px;top:925px;font-size:14px;line-height:16px;font-weight:normal;color:rgba(0,0,0,0.87);"><span style="letter-spacing:0.08px">I</span><span style="letter-spacing:0.1px">nvoic</span><span style="letter-spacing:-0.1px">e </span><span style="letter-spacing:0.1px">out</span></div>
<div class="a t" style="left:282px;top:898px;font-size:11px;line-height:13px;font-weight:normal;color:rgba(0,0,0,0.6);"><span style="letter-spacing:-0.05px">B</span><span style="letter-spacing:0.2px">usines</span><span style="letter-spacing:0.03px">s</span><span style="letter-spacing:-0.18px"> </span><span style="letter-spacing:-0.01px">P</span><span style="letter-spacing:0.2px">artner</span></div>
<div class="a t" style="left:282px;top:926px;font-size:14px;line-height:16px;font-weight:normal;color:rgba(0,0,0,0.87);"><span style="letter-spacing:-0.58px">E</span><span style="letter-spacing:0.1px">quino</span><span style="letter-spacing:-0.1px">r</span><span style="letter-spacing:-0.66px"> ,</span><span style="letter-spacing:-0.1px"> </span><span style="letter-spacing:0.1px">43400</span></div>
<div class="a t" style="left:528px;top:898px;font-size:11px;line-height:13px;font-weight:normal;color:rgba(0,0,0,0.6);"><span style="letter-spacing:-0.2px">C</span><span style="letter-spacing:0.2px">urrency</span></div>
<div class="a t" style="left:528px;top:925px;font-size:14px;line-height:16px;font-weight:normal;color:rgba(0,0,0,0.87);"><span style="letter-spacing:-0.56px">N</span><span style="letter-spacing:-0.78px">O</span><span style="letter-spacing:-0.44px">K</span></div>
<div class="a t" style="left:774px;top:898px;font-size:11px;line-height:13px;font-weight:normal;color:rgba(0,0,0,0.6);"><span style="letter-spacing:0.11px">A</span><span style="letter-spacing:0.2px">mount</span></div>
<div class="a t" style="left:774px;top:925px;font-size:14px;line-height:16px;font-weight:normal;color:rgba(0,0,0,0.87);"><span style="letter-spacing:-0.46px">4,</span><span style="letter-spacing:0.1px">60</span><span style="letter-spacing:-0.46px">3,</span><span style="letter-spacing:0.1px">25</span><span style="letter-spacing:0.01px">0.</span><span style="letter-spacing:0.1px">00</span></div>
<div class="a t" style="left:1020px;top:898px;font-size:11px;line-height:13px;font-weight:normal;color:rgba(0,0,0,0.6);"><span style="letter-spacing:0.11px">A</span><span style="letter-spacing:0.2px">moun</span><span style="letter-spacing:0.03px">t </span><span style="letter-spacing:0.2px">t</span><span style="letter-spacing:0.03px">o</span><span style="letter-spacing:-0.07px"> </span><span style="letter-spacing:0.11px">A</span><span style="letter-spacing:0.2px">ssemble</span></div>
<div class="a t" style="left:1020px;top:925px;font-size:14px;line-height:16px;font-weight:normal;color:rgba(0,0,0,0.87);"><span style="letter-spacing:0.01px">0.</span><span style="letter-spacing:0.1px">00</span></div>
<svg class="a" style="left:372.5px;top:896px;width:17px;height:17px" viewBox="0 0 24 24"><path fill="rgba(0,0,0,0.6)" d="M19 19H5V5h7V3H5c-1.11 0-2 .9-2 2v14c0 1.1.89 2 2 2h14c1.1 0 2-.9 2-2v-7h-2v7zM14 3v2h3.59l-9.83 9.83 1.41 1.41L19 6.41V10h2V3h-7z"/></svg>
<svg class="a" style="left:1497.0px;top:908.52px;width:23px;height:23px" viewBox="0 0 24 24"><path fill="rgba(0,0,0,0.6)" d="M16.59 8.59 12 13.17 7.41 8.59 6 10l6 6 6-6z"/></svg>
</body></html>
